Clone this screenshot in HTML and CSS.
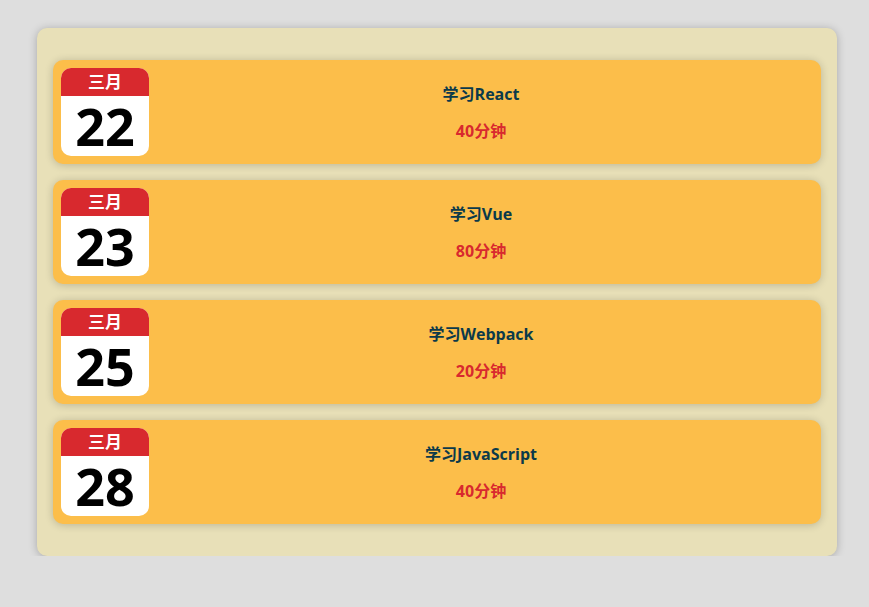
FILE: index.html
```html
<!DOCTYPE html>
<html lang="zh">
<head>
<meta charset="utf-8">
<link rel="stylesheet" href="styles.css">
</head>
<body>
<div class="list">
  <div class="item">
    <div class="cal"><div class="cal-month">三月</div><div class="cal-day">22</div></div>
    <div class="info"><div class="title">学习React</div><div class="time">40分钟</div></div>
  </div>
  <div class="item">
    <div class="cal"><div class="cal-month">三月</div><div class="cal-day">23</div></div>
    <div class="info"><div class="title">学习Vue</div><div class="time">80分钟</div></div>
  </div>
  <div class="item">
    <div class="cal"><div class="cal-month">三月</div><div class="cal-day">25</div></div>
    <div class="info"><div class="title">学习Webpack</div><div class="time">20分钟</div></div>
  </div>
  <div class="item">
    <div class="cal"><div class="cal-month">三月</div><div class="cal-day">28</div></div>
    <div class="info"><div class="title">学习JavaScript</div><div class="time">40分钟</div></div>
  </div>
</div>
</body>
</html>
```
FILE: styles.css
```css
html, body {
  margin: 0;
  padding: 0;
  background: #dedede;
  font-family: "Open Sans", "Noto Sans CJK SC", sans-serif;
}
.list {
  width: 768px;
  margin: 28px 0 0 37px;
  padding: 32px 16px;
  background: #e8e0b8;
  border-radius: 10px;
  box-shadow: 0 1px 8px rgba(0,0,0,0.25);
  display: flex;
  flex-direction: column;
  gap: 16px;
}
.item {
  display: flex;
  align-items: center;
  padding: 8px;
  background: #fcbe4a;
  border-radius: 10px;
  box-shadow: 0 1px 8px rgba(0,0,0,0.2);
}
.cal {
  width: 88px;
  height: 88px;
  border-radius: 10px;
  overflow: hidden;
  background: #fff;
  display: flex;
  flex-direction: column;
}
.cal-month {
  height: 28px;
  background: #d8292e;
  color: #fff;
  font-weight: bold;
  font-size: 17px;
  line-height: 28px;
  text-align: center;
}
.cal-day {
  height: 60px;
  text-align: center;
  font-size: 52px;
  font-weight: bold;
  color: #000;
  line-height: 60px;
}
.info {
  flex: 1;
  display: flex;
  flex-direction: column;
  align-items: center;
  gap: 15px;
}
.title {
  font-size: 16px;
  font-weight: bold;
  color: #0b3a4a;
  line-height: 22px;
}
.time {
  font-size: 16px;
  font-weight: bold;
  color: #d8292e;
  line-height: 22px;
}
```
